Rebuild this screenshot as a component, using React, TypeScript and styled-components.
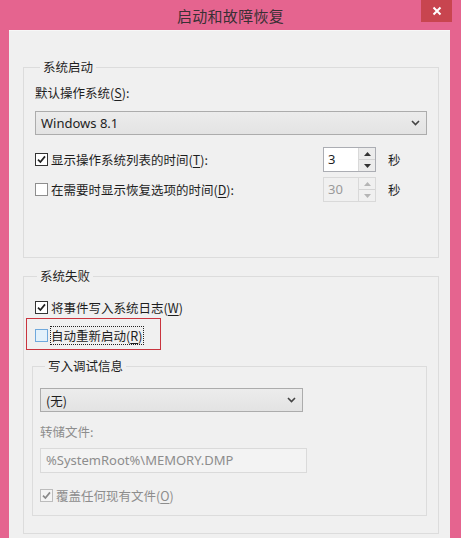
import styled, { createGlobalStyle } from "styled-components";

const GlobalStyle = createGlobalStyle`
  html, body {
    margin: 0;
    padding: 0;
    height: 100%;
    overflow: hidden;
  }
  body {
    font-family: "Noto Sans", "Noto Sans CJK SC", sans-serif;
    font-size: 13px;
    color: #1e1e1e;
  }
`;

// ----------
// Window frame
// ----------
const StyledWindow = styled.div`
  display: flex;
  flex-direction: column;
  height: 100vh;
  background: #e5648f;
  padding: 0 11px 0 9px;
  box-sizing: border-box;
`;

const StyledTitleBar = styled.div`
  display: grid;
  grid-template-columns: 1fr auto 1fr;
  height: 30px;
  margin-right: -2px;
`;

const StyledTitle = styled.div`
  grid-column: 2;
  align-self: center;
  font-family: "Noto Sans CJK SC", sans-serif;
  font-size: 15px;
  color: #3a3035;
  letter-spacing: 0.3px;
`;

const StyledClose = styled.div`
  grid-column: 3;
  justify-self: end;
  align-self: start;
  width: 31px;
  height: 22px;
  background: #c8454f;
  color: #fff;
  display: flex;
  align-items: center;
  justify-content: center;
`;

const StyledBody = styled.div`
  flex: 1;
  overflow: hidden;
  background: #f0f0f0;
  border-top: 1px solid #f7f7f7;
  padding: 27px 11px 0 14px;
`;

// ----------
// Group box
// ----------
const StyledGroup = styled.fieldset<{ $pad: string; $mt?: number; $mr?: number }>`
  margin: ${(p) => p.$mt ?? 0}px ${(p) => p.$mr ?? 0}px 0 0;
  padding: ${(p) => p.$pad};
  border: 1px solid #dcdcdc;
  min-width: 0;
`;

const StyledLegend = styled.legend`
  margin-left: 5px;
  padding: 0 3px;
  line-height: 18px;
  font-size: 12.5px;
  font-family: "Noto Sans CJK SC", sans-serif;
`;

const StyledLabel = styled.div<{ $disabled?: boolean; $mt?: number }>`
  line-height: 18px;
  font-size: 12.5px;
  margin-top: ${(p) => p.$mt ?? 0}px;
  color: ${(p) => (p.$disabled ? "#8d8d8d" : "#1e1e1e")};
  font-family: "Noto Sans CJK SC", sans-serif;
`;

const Key = styled.span`
  text-decoration: underline;
  text-underline-offset: 2px;
`;

// ----------
// Combo box
// ----------
const StyledCombo = styled.div<{ $width: number; $mt: number }>`
  display: flex;
  align-items: center;
  justify-content: space-between;
  width: ${(p) => p.$width}px;
  height: 24px;
  margin-top: ${(p) => p.$mt}px;
  box-sizing: border-box;
  padding: 0 6px 0 5px;
  border: 1px solid #acacac;
  background: linear-gradient(#ececec, #e3e3e3);
  font-size: 13px;
`;

const StyledComboCjk = styled.span`
  font-family: "Noto Sans CJK SC", sans-serif;
  font-size: 12.5px;
`;

const Chevron = () => (
  <svg width="9" height="6" viewBox="0 0 9 6">
    <path d="M1 1 L4.5 4.5 L8 1" fill="none" stroke="#444" strokeWidth="1.6" />
  </svg>
);

// ----------
// Checkbox rows
// ----------
const StyledRow = styled.div<{ $ml?: number; $mt?: number }>`
  display: flex;
  align-items: center;
  height: 22px;
  margin-left: ${(p) => p.$ml ?? 0}px;
  margin-top: ${(p) => p.$mt ?? 0}px;
`;

type BoxState = "normal" | "disabled" | "hover";

const boxBorder = (state: BoxState, checked: boolean) => {
  if (state === "disabled") return "#bcbcbc";
  if (state === "hover") return "#6fa8dc";
  return checked ? "#333" : "#8e8e8e";
};

const StyledBox = styled.span<{ $state: BoxState; $checked: boolean }>`
  display: flex;
  align-items: center;
  justify-content: center;
  width: 13px;
  height: 13px;
  box-sizing: border-box;
  margin-right: 3px;
  flex-shrink: 0;
  border: 1px solid ${(p) => boxBorder(p.$state, p.$checked)};
  background: ${(p) =>
    p.$state === "disabled" ? "#f4f4f4" : p.$state === "hover" ? "#e3f1fb" : "#fff"};
`;

const StyledCheckText = styled.span<{ $disabled?: boolean; $focus?: boolean }>`
  font-family: "Noto Sans CJK SC", sans-serif;
  font-size: 12.5px;
  line-height: 17px;
  color: ${(p) => (p.$disabled ? "#8d8d8d" : "#1e1e1e")};
  outline: ${(p) => (p.$focus ? "1px dotted #222" : "none")};
  padding: 0 1px 0 0;
`;

function CheckRow({
  checked,
  state = "normal",
  focus,
  ml,
  mt,
  children,
}: {
  checked: boolean;
  state?: BoxState;
  focus?: boolean;
  ml?: number;
  mt?: number;
  children: React.ReactNode;
}) {
  return (
    <StyledRow $ml={ml} $mt={mt}>
      <StyledBox $state={state} $checked={checked}>
        {checked && (
          <svg width="9" height="9" viewBox="0 0 9 9">
            <path
              d="M1 4.6 L3.4 7 L8 1.4"
              fill="none"
              stroke={state === "disabled" ? "#8a8a8a" : "#222"}
              strokeWidth="1.7"
            />
          </svg>
        )}
      </StyledBox>
      <StyledCheckText $disabled={state === "disabled"} $focus={focus}>
        {children}
      </StyledCheckText>
    </StyledRow>
  );
}

// ----------
// Spinner
// ----------
const StyledSpinRow = styled.div<{ $mt: number }>`
  display: grid;
  grid-template-columns: 288px 53px auto;
  align-items: center;
  margin-top: ${(p) => p.$mt}px;
`;

const StyledSpin = styled.div<{ $disabled?: boolean }>`
  display: flex;
  height: 25px;
  box-sizing: border-box;
  border: 1px solid ${(p) => (p.$disabled ? "#d9d9d9" : "#abadb3")};
  background: ${(p) => (p.$disabled ? "#f0f0f0" : "#fff")};
`;

const StyledSpinValue = styled.div<{ $disabled?: boolean }>`
  flex: 1;
  padding: 2px 0 0 4px;
  color: ${(p) => (p.$disabled ? "#9a9a9a" : "#1e1e1e")};
  font-size: 13px;
`;

const StyledSpinButtons = styled.div`
  display: flex;
  flex-direction: column;
  width: 16px;
  border-left: 1px solid #d9d9d9;
`;

const StyledSpinButton = styled.div<{ $disabled?: boolean; $down?: boolean }>`
  flex: 1;
  display: flex;
  align-items: center;
  justify-content: center;
  background: ${(p) => (p.$disabled ? "#f0f0f0" : "#ececec")};
  border-top: ${(p) => (p.$down ? "1px solid #d4d4d4" : "none")};
`;

const StyledUnit = styled.span`
  margin-left: 12px;
  font-size: 12.5px;
  font-family: "Noto Sans CJK SC", sans-serif;
`;

function Spinner({ value, disabled }: { value: string; disabled?: boolean }) {
  const c = disabled ? "#b5b5b5" : "#333";
  return (
    <StyledSpin $disabled={disabled}>
      <StyledSpinValue $disabled={disabled}>{value}</StyledSpinValue>
      <StyledSpinButtons>
        <StyledSpinButton $disabled={disabled}>
          <svg width="7" height="4" viewBox="0 0 7 4">
            <path d="M0 4 L3.5 0 L7 4 Z" fill={c} />
          </svg>
        </StyledSpinButton>
        <StyledSpinButton $disabled={disabled} $down>
          <svg width="7" height="4" viewBox="0 0 7 4">
            <path d="M0 0 L3.5 4 L7 0 Z" fill={c} />
          </svg>
        </StyledSpinButton>
      </StyledSpinButtons>
    </StyledSpin>
  );
}

// ----------
// Misc parts
// ----------
const StyledHighlight = styled.div`
  width: 135px;
  height: 32px;
  box-sizing: border-box;
  margin-left: -6px;
  padding: 5px 0 0 8px;
  border: 1px solid #c9343e;
`;

const StyledTextBox = styled.div`
  width: 267px;
  height: 25px;
  box-sizing: border-box;
  margin-top: 7px;
  padding: 2px 0 0 5px;
  border: 1px solid #dadada;
  background: #f3f3f3;
  color: #8d8d8d;
  font-size: 13px;
`;

export default function App() {
  return (
    <>
      <GlobalStyle />
      <StyledWindow>
        <StyledTitleBar>
          <StyledTitle>启动和故障恢复</StyledTitle>
          <StyledClose>
            <svg width="10" height="10" viewBox="0 0 10 10">
              <path d="M1.5 1.5 L8.5 8.5 M8.5 1.5 L1.5 8.5" stroke="#fff" strokeWidth="2" />
            </svg>
          </StyledClose>
        </StyledTitleBar>

        <StyledBody>
          <StyledGroup $pad="0 11px 55px 11px">
            <StyledLegend>系统启动</StyledLegend>
            <StyledLabel $mt={8}>
              默认操作系统(<Key>S</Key>):
            </StyledLabel>
            <StyledCombo $width={392} $mt={9}>
              <span>Windows 8.1</span>
              <Chevron />
            </StyledCombo>
            <StyledSpinRow $mt={12}>
              <CheckRow checked>
                显示操作系统列表的时间(<Key>T</Key>):
              </CheckRow>
              <Spinner value="3" />
              <StyledUnit>秒</StyledUnit>
            </StyledSpinRow>
            <StyledSpinRow $mt={5}>
              <CheckRow checked={false}>
                在需要时显示恢复选项的时间(<Key>D</Key>):
              </CheckRow>
              <Spinner value="30" disabled />
              <StyledUnit>秒</StyledUnit>
            </StyledSpinRow>
          </StyledGroup>

          <StyledGroup $pad="0 0 17px 8px" $mt={9}>
            <StyledLegend>系统失败</StyledLegend>
            <CheckRow checked ml={3} mt={11}>
              将事件写入系统日志(<Key>W</Key>)
            </CheckRow>
            <StyledHighlight>
              <CheckRow checked={false} state="hover" focus>
                自动重新启动(<Key>R</Key>)
              </CheckRow>
            </StyledHighlight>

            <StyledGroup $pad="0 0 9px 7px" $mt={7} $mr={11}>
              <StyledLegend>写入调试信息</StyledLegend>
              <StyledCombo $width={263} $mt={13}>
                <StyledComboCjk>(无)</StyledComboCjk>
                <Chevron />
              </StyledCombo>
              <StyledLabel $disabled $mt={11}>
                转储文件:
              </StyledLabel>
              <StyledTextBox>%SystemRoot%\MEMORY.DMP</StyledTextBox>
              <CheckRow checked state="disabled" mt={11}>
                覆盖任何现有文件(<Key>O</Key>)
              </CheckRow>
            </StyledGroup>
          </StyledGroup>
        </StyledBody>
      </StyledWindow>
    </>
  );
}
